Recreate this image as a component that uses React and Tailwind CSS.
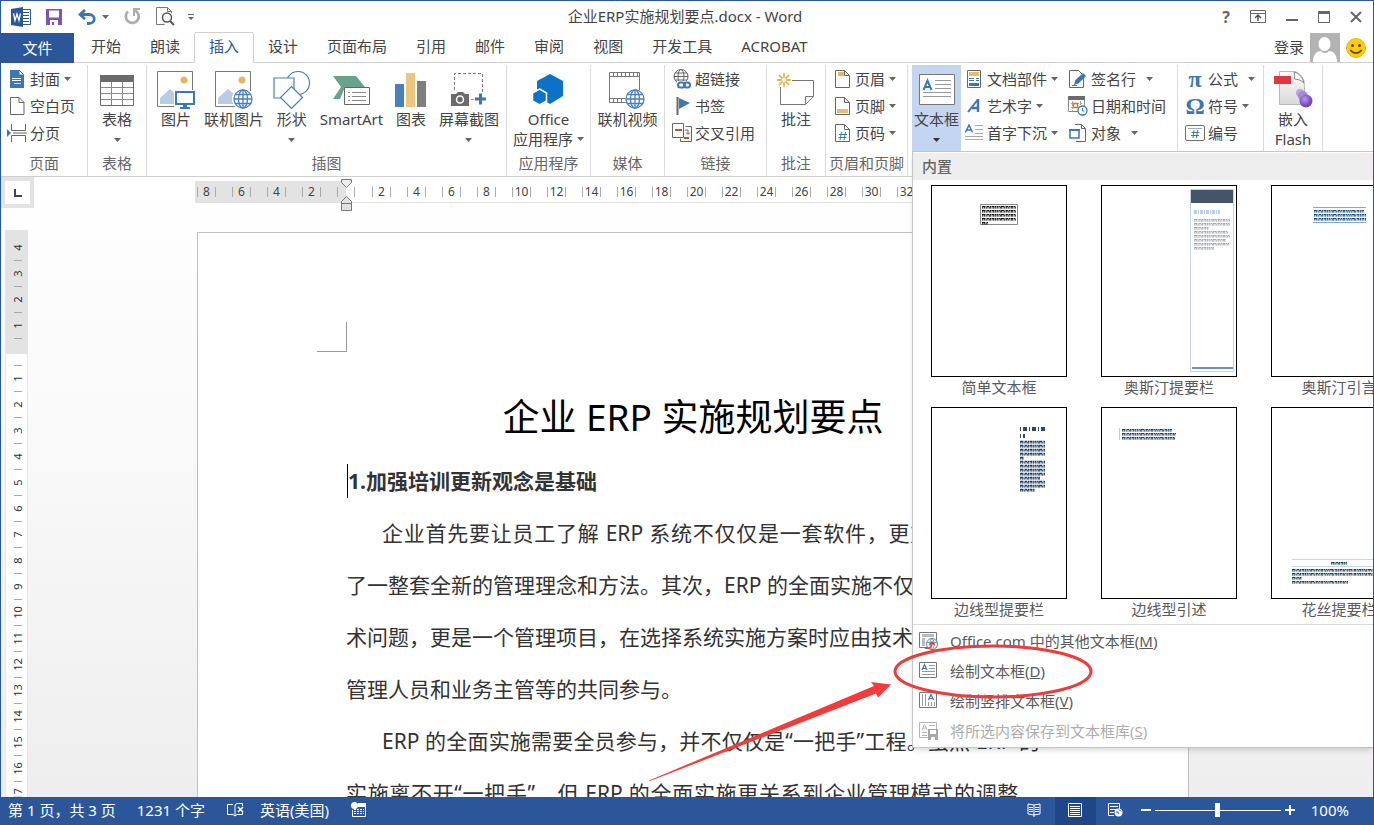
import { useState } from "react";
import { clsx } from "clsx";

const TABS = ["开始", "朗读", "插入", "设计", "页面布局", "引用", "邮件", "审阅", "视图", "开发工具", "ACROBAT"];

const RULER_LEFT = ["8", "6", "4", "2"];
const RULER_RIGHT = Array.from({ length: 18 }, (_, i) => String((i + 1) * 2));
const VRULER_TOP = ["4", "3", "2", "1"];
const VRULER_BODY = Array.from({ length: 17 }, (_, i) => String(i + 1));

/* ---------- shared bits ---------- */

function Svg({ w, h, children }) {
  return (
    <svg width={w} height={h} viewBox={`0 0 ${w} ${h}`} fill="none" className="shrink-0" aria-hidden>
      {children}
    </svg>
  );
}

function Caret({ className, color = "#666" }) {
  return (
    <svg width="7" height="4" viewBox="0 0 7 4" className={clsx("shrink-0", className)} aria-hidden>
      <path d="M0 0h7L3.5 4z" fill={color} />
    </svg>
  );
}

function Globe({ cx, cy, r, width = 1.3 }) {
  return (
    <g stroke="#4a80bd" strokeWidth={width} fill="#fff">
      <circle cx={cx} cy={cy} r={r} />
      <ellipse cx={cx} cy={cy} rx={r / 2} ry={r} fill="none" />
      <path d={`M${cx} ${cy - r}v${2 * r}M${cx - r} ${cy}h${2 * r}`} />
      <path d={`M${cx - r + 1} ${cy - r / 2}h${2 * r - 2}M${cx - r + 1} ${cy + r / 2}h${2 * r - 2}`} />
    </g>
  );
}

/* ---------- ribbon icons ---------- */

const CoverIcon = () => (
  <Svg w={16} h={18}>
    <path d="M1 0h9l5 5v13H1z" fill="#3c76b5" />
    <path d="M10 0v5h5z" fill="#fff" stroke="#3c76b5" />
    <path d="M3 8l1 1 1-1 1 1 1-1 1 1 1-1 1 1 1-1 1 1M3 10l1 1 1-1 1 1 1-1 1 1 1-1 1 1 1-1 1 1" stroke="#fff" />
    <path d="M5 13.500h7" stroke="#cfe0f2" />
  </Svg>
);

const BlankIcon = () => (
  <Svg w={16} h={18}>
    <path d="M1.500 .5h8.500l5 5v12h-13.500z M10 .5v5h5" stroke="#666" />
  </Svg>
);

const BreakIcon = () => (
  <Svg w={20} h={18}>
    <path d="M4.500 0v6.500h14V0M4.500 18v-6.500h14V18M6 9h14" stroke="#666" />
    <path d="M0 5l4 4-4 4z" fill="#3c76b5" />
  </Svg>
);

const TableIcon = () => (
  <Svg w={36} h={34}>
    <path d="M1.500 3.500h33v29h-33z" stroke="#6b6b6b" fill="#fff" />
    <path d="M1 2h34v7H1z" fill="#6b6b6b" />
    <path d="M12.500 9v23M23.500 9v23M2 14.500h32M2 20.500h32M2 26.500h32" stroke="#8a8a8a" />
  </Svg>
);

function PictureBase() {
  return (
    <>
      <path d="M.5 .5h35v35H.5z" stroke="#777" fill="#fff" />
      <circle cx="27" cy="9" r="3.500" fill="#e8b65c" />
      <path d="M3 33v-6l10-9 7 6v9z" fill="#b8cce4" />
    </>
  );
}

const PictureIcon = () => (
  <Svg w={38} h={38}>
    <PictureBase />
    <path d="M17 19h21v19H17z" fill="#fff" />
    <path d="M19 21h18v12H19z" stroke="#3c76b5" strokeWidth="2" />
    <path d="M26 34h4v2h3v2H23v-2h3z" fill="#3c76b5" />
  </Svg>
);

const OnlinePictureIcon = () => (
  <Svg w={38} h={38}>
    <PictureBase />
    <circle cx="28" cy="28" r="11" fill="#fff" />
    <Globe cx={28} cy={28} r={9} />
  </Svg>
);

const ShapesIcon = () => (
  <Svg w={38} h={38}>
    <g stroke="#4a80bd" fill="#fff" strokeWidth="1.200">
      <circle cx="25" cy="12" r="11.500" />
      <path d="M1 7h20v20H1z" />
      <path d="M18.500 15.500l11 11-11 11-11-11z" />
    </g>
  </Svg>
);

const SmartArtIcon = () => (
  <Svg w={38} h={36}>
    <path d="M1 4h23l9 11H13l-5 12H1l8-12z" fill="#6aa38b" />
    <path d="M12.500 15.500h25v17h-25z" fill="#fff" stroke="#666" />
    <path d="M16 20.500h2M20 20.500h14M16 24.500h2M20 24.500h14M16 28.500h2M20 28.500h14" stroke="#888" />
  </Svg>
);

const ChartIcon = () => (
  <Svg w={32} h={36}>
    <path d="M0 12h9v23H0z" fill="#4a80bd" />
    <path d="M11 1h9v34h-9z" fill="#ecc57f" />
    <path d="M22 9h9v26h-9z" fill="#7f7f7f" />
  </Svg>
);

const ScreenshotIcon = () => (
  <Svg w={36} h={36}>
    <path d="M3.500 18V1.500h28V20" stroke="#777" strokeDasharray="3 2" />
    <path d="M0 22h5l2-2h5l2 2h4v12H0z" fill="#6b6b6b" />
    <circle cx="9" cy="27.500" r="3.500" stroke="#fff" strokeWidth="1.500" />
    <path d="M20 27.500h3" stroke="#999" />
    <path d="M24 27h11M29.500 21.500v11" stroke="#3c76b5" strokeWidth="3" />
  </Svg>
);

const AppsIcon = () => (
  <Svg w={34} h={36}>
    <path d="M18 2l13 7v15l-13 8-13-8V9z" fill="#0a72c7" />
    <path d="M7.500 17l7 4v8l-7 4-7-4v-8z" fill="#0a72c7" stroke="#fff" strokeWidth="1.500" />
  </Svg>
);

const VideoIcon = () => (
  <Svg w={36} h={38}>
    <path d="M.5 1.500h30v30H.5z" fill="#fff" stroke="#777" />
    <path d="M1 5.500h29M1 27.500h29" stroke="#777" />
    <path d="M4.500 2v3M8.500 2v3M12.500 2v3M16.500 2v3M20.500 2v3M24.500 2v3M28.500 2v3" stroke="#777" />
    <path d="M4.500 28v3M8.500 28v3M12.500 28v3" stroke="#777" />
    <circle cx="26" cy="28" r="10" fill="#fff" />
    <Globe cx={26} cy={28} r={9} />
  </Svg>
);

const LinkIcon = () => (
  <Svg w={18} h={20}>
    <g stroke="#666">
      <circle cx="8" cy="7.500" r="7" />
      <ellipse cx="8" cy="7.500" rx="3" ry="7" />
      <path d="M1 7.500h14M2 4h12M2 11h12" />
    </g>
    <path d="M4 12h14v8H4z" fill="#fff" />
    <rect x="5" y="13.500" width="7" height="5" rx="2.500" stroke="#3c76b5" strokeWidth="2" />
    <rect x="11" y="13.500" width="6" height="5" rx="2.500" stroke="#3c76b5" strokeWidth="2" />
  </Svg>
);

const BookmarkIcon = () => (
  <Svg w={18} h={18}>
    <path d="M4.500 0v18" stroke="#666" strokeWidth="2" />
    <path d="M6 1l11 5-11 6z" fill="#3c76b5" />
  </Svg>
);

const CrossRefIcon = () => (
  <Svg w={20} h={20}>
    <path d="M.5 .5h11v14H.5z" stroke="#666" fill="#fff" />
    <path d="M8.500 18.500v-3M8.500 18.500h11v-15h-6" stroke="#666" />
    <path d="M3 7h7M12 15h5" stroke="#c0532a" strokeWidth="2" />
    <path d="M13 7h3v4M14 9.500l2 2 2-2" stroke="#666" />
  </Svg>
);

const CommentIcon = () => (
  <Svg w={38} h={34}>
    <path d="M3.500 14v17.500h25l8-8V7.500H15" stroke="#777" />
    <path d="M28.500 31.500v-8h8" stroke="#777" />
    <g stroke="#e8b65c" strokeWidth="1.800">
      <path d="M7 0v4M7 10v4M0 7h4M10 7h4M2 2l3 3M9 9l3 3M12 2L9 5M5 9l-3 3" />
      <circle cx="7" cy="7" r="2.500" strokeWidth="1" />
    </g>
  </Svg>
);

function PageOutline({ children }) {
  return (
    <Svg w={15} h={18}>
      <path d="M.5 .5h9l5 5v12H.5z M9.500 .5v5h5" stroke="#666" fill="#fff" />
      {children}
    </Svg>
  );
}

const HeaderIcon = () => (
  <PageOutline>
    <path d="M3 2h6v4H3z" fill="#e8b65c" />
  </PageOutline>
);
const FooterIcon = () => (
  <PageOutline>
    <path d="M2 12h11v4H2z" fill="#ecb96f" />
  </PageOutline>
);
const PageNumIcon = () => (
  <PageOutline>
    <path d="M6.500 8l-1.500 8M10.500 8l-1.500 8M4 10.500h8M3.500 13.500h8" stroke="#3c76b5" />
  </PageOutline>
);

const TextBoxIcon = () => (
  <Svg w={36} h={34}>
    <path d="M.5 1.500h35v30H.5z" fill="#fff" stroke="#777" />
    <path d="M4.500 17l4-9.500 4 9.500M6 14h5" stroke="#3c76b5" strokeWidth="2" />
    <path d="M16 7.500h16M16 11.500h16M16 15.500h16M4 19.500h28M4 23.500h28" stroke="#999" />
  </Svg>
);

const PartsIcon = () => (
  <Svg w={14} h={18}>
    <path d="M.5 .5h13v17H.5z" stroke="#666" fill="#fff" />
    <path d="M2 2h10v4H2z" fill="#ecb96f" />
    <path d="M2 8.500h5M2 10.500h5M9 8.500h3M9 10.500h3" stroke="#3c76b5" />
    <path d="M2 13h10v3H2z" fill="#3c76b5" />
  </Svg>
);

const WordArtIcon = () => (
  <Svg w={15} h={16}>
    <path d="M1 14L10.500 2" stroke="#3c76b5" strokeWidth="2" />
    <path d="M11 1v13M5 10h6" stroke="#3c76b5" strokeWidth="2.500" />
  </Svg>
);

const DropCapIcon = () => (
  <Svg w={18} h={18}>
    <path d="M.5 8.500l3.500-7.500 3.500 7.500M2 6h4" stroke="#3c76b5" strokeWidth="1.500" />
    <path d="M10 1.500h8M10 5.500h8M10 9.500h8M0 12.500h18M0 15.500h18" stroke="#aaa" />
  </Svg>
);

const SignIcon = () => (
  <Svg w={18} h={18}>
    <path d="M.5 .5h9l5 5v12H.5z" stroke="#666" fill="#fff" />
    <path d="M5 15l1.500-5L14 3l3 3-7.500 7.500z" fill="#3c76b5" />
    <path d="M3 15.500h5" stroke="#3c76b5" />
  </Svg>
);

const DateIcon = () => (
  <Svg w={20} h={20}>
    <path d="M.5 2.500h16v13H.5z" stroke="#888" fill="#fff" />
    <path d="M0 0h17v4H0z" fill="#6b6b6b" />
    <path d="M3 7.500h11M3 11.500h5M4.500 5v10M12.500 5v4" stroke="#aaa" strokeDasharray="2 1" />
    <path d="M5.500 7.500h4v4h-4z" stroke="#d9772b" strokeWidth="1.500" />
    <circle cx="14.500" cy="14.500" r="4.500" fill="#fff" stroke="#3c76b5" strokeWidth="1.300" />
    <path d="M14.500 12v3h2" stroke="#3c76b5" />
  </Svg>
);

const ObjectIcon = () => (
  <Svg w={18} h={18}>
    <path d="M6 .5h6.500l4 4v13H7" stroke="#666" />
    <path d="M12.500 .5v4h4" stroke="#666" />
    <path d="M1 6h9v8H1z" fill="#fff" stroke="#3c76b5" strokeWidth="1.500" />
    <path d="M0 6h11" stroke="#3c76b5" strokeWidth="2" />
  </Svg>
);

const SymbolGlyph = ({ children }) => (
  <span className="font-['Liberation_Serif',serif] text-[24px] leading-5 font-bold text-[#3c76b5]" aria-hidden>
    {children}
  </span>
);

const NumberIcon = () => (
  <Svg w={20} h={16}>
    <rect x=".5" y=".5" width="19" height="15" rx="1.500" stroke="#7a6a60" fill="#fff" />
    <path d="M3 3.500h14" stroke="#aaa" />
    <path d="M9 5l-1 8M12.500 5l-1 8M6.500 7.500h8M6 10.500h8" stroke="#3c76b5" />
  </Svg>
);

const FlashIcon = () => (
  <Svg w={40} h={38}>
    <defs>
      <radialGradient id="ball" cx="0.4" cy="0.35">
        <stop offset="0" stopColor="#b79be8" />
        <stop offset="1" stopColor="#7646c4" />
      </radialGradient>
      <linearGradient id="sheet" x1="0" y1="0" x2="0" y2="1">
        <stop offset="0" stopColor="#fdfdfd" />
        <stop offset="1" stopColor="#d9d9d9" />
      </linearGradient>
    </defs>
    <path d="M6.500 .5H22q9 3 9.500 14v19h-25z" fill="url(#sheet)" stroke="#b9b9b9" />
    <path d="M21 1q1 4 .5 7 6 0 9.500 4Q29 3 21 1z" fill="#fff" stroke="#888" />
    <path d="M1 5h17v8H1z" fill="#e0383f" />
    <circle cx="27" cy="22" r="4" fill="#b9a6e0" />
    <circle cx="30" cy="25" r="5" fill="#a58adb" />
    <circle cx="33" cy="30" r="6.500" fill="url(#ball)" />
  </Svg>
);

/* ---------- ribbon building blocks ---------- */

function Group({ label, className, children }) {
  return (
    <section className={clsx("relative flex shrink-0 flex-col border-r border-[#dcdcdc]", className)}>
      <div className="flex h-[86px]">{children}</div>
      {label && <div className="text-center leading-[25px] text-[#666]">{label}</div>}
    </section>
  );
}

function BigButton({ icon, label, second, caret, active }) {
  return (
    <button
      type="button"
      className={clsx("flex flex-col items-center pt-[5px]", active ? "bg-[#c3d5f0] px-[2px]" : "px-[6px]")}
    >
      <span className="flex h-[39px] items-center justify-center">{icon}</span>
      <span className="leading-[21px] whitespace-nowrap">{label}</span>
      {second && (
        <span className="flex items-center gap-1 leading-[18px] whitespace-nowrap">
          {second}
          {caret && <Caret />}
        </span>
      )}
      {caret && !second && <Caret className="mt-2" color={active ? "#333" : "#666"} />}
    </button>
  );
}

function SmallButton({ icon, label, caret, wide }) {
  return (
    <button type="button" className="flex h-[27px] items-center gap-1 whitespace-nowrap">
      <span className="flex w-[18px] shrink-0 items-center justify-center">{icon}</span>
      <span>{label}</span>
      {caret && <Caret className={wide ? "ml-[6px]" : ""} />}
    </button>
  );
}

function Ribbon() {
  return (
    <div className="flex h-[114px] shrink-0 overflow-hidden border-b border-[#d0d0d0] bg-white pt-[2px]">
      <Group label="页面" className="w-[87px]">
        <div className="flex flex-col pl-[7px]">
          <SmallButton icon={<CoverIcon />} label="封面" caret />
          <SmallButton icon={<BlankIcon />} label="空白页" />
          <SmallButton icon={<BreakIcon />} label="分页" />
        </div>
      </Group>
      <Group label="表格" className="w-[59px]">
        <div className="flex flex-1 justify-center">
          <BigButton icon={<TableIcon />} label="表格" caret />
        </div>
      </Group>
      <Group label="插图" className="w-[360px]">
        <div className="flex flex-1 justify-between pr-px pl-2">
          <BigButton icon={<span className="-mx-1"><PictureIcon /></span>} label="图片" />
          <BigButton icon={<OnlinePictureIcon />} label="联机图片" />
          <BigButton icon={<span className="-mx-1"><ShapesIcon /></span>} label="形状" caret />
          <BigButton icon={<SmartArtIcon />} label="SmartArt" />
          <BigButton icon={<span className="-mx-px"><ChartIcon /></span>} label="图表" />
          <BigButton icon={<ScreenshotIcon />} label="屏幕截图" caret />
        </div>
      </Group>
      <Group label="应用程序" className="w-[84px]">
        <div className="flex flex-1 justify-center">
          <BigButton icon={<AppsIcon />} label="Office" second="应用程序" caret />
        </div>
      </Group>
      <Group label="媒体" className="w-[74px]">
        <div className="flex flex-1 justify-center">
          <BigButton icon={<VideoIcon />} label="联机视频" />
        </div>
      </Group>
      <Group label="链接" className="w-[102px]">
        <div className="flex flex-col pl-2">
          <SmallButton icon={<LinkIcon />} label="超链接" />
          <SmallButton icon={<BookmarkIcon />} label="书签" />
          <SmallButton icon={<CrossRefIcon />} label="交叉引用" />
        </div>
      </Group>
      <Group label="批注" className="w-[59px]">
        <div className="flex flex-1 justify-center">
          <BigButton icon={<CommentIcon />} label="批注" />
        </div>
      </Group>
      <Group label="页眉和页脚" className="w-[82px]">
        <div className="flex flex-col pl-[7px]">
          <SmallButton icon={<HeaderIcon />} label="页眉" caret />
          <SmallButton icon={<FooterIcon />} label="页脚" caret />
          <SmallButton icon={<PageNumIcon />} label="页码" caret />
        </div>
      </Group>
      <Group className="w-[270px]">
        <div className="flex pl-1">
          <BigButton icon={<TextBoxIcon />} label="文本框" caret active />
        </div>
        <div className="flex w-[108px] flex-col pl-1">
          <SmallButton icon={<PartsIcon />} label="文档部件" caret />
          <SmallButton icon={<WordArtIcon />} label="艺术字" caret />
          <SmallButton icon={<DropCapIcon />} label="首字下沉" caret />
        </div>
        <div className="flex flex-col">
          <SmallButton icon={<SignIcon />} label="签名行" caret wide />
          <SmallButton icon={<DateIcon />} label="日期和时间" />
          <SmallButton icon={<ObjectIcon />} label="对象" caret wide />
        </div>
      </Group>
      <Group className="w-[86px]">
        <div className="flex flex-col pl-2">
          <SmallButton icon={<SymbolGlyph>π</SymbolGlyph>} label="公式" caret wide />
          <SmallButton icon={<SymbolGlyph>Ω</SymbolGlyph>} label="符号" caret />
          <SmallButton icon={<NumberIcon />} label="编号" />
        </div>
      </Group>
      <Group className="w-[59px]">
        <div className="flex flex-1 justify-center">
          <BigButton icon={<FlashIcon />} label="嵌入" second="Flash" />
        </div>
      </Group>
    </div>
  );
}

/* ---------- title bar and tabs ---------- */

function TitleBar() {
  return (
    <header className="grid h-8 shrink-0 grid-cols-[1fr_auto_1fr] items-center bg-white pb-px">
      <div className="flex items-center pl-[10px]">
        <Svg w={20} h={20}>
          <path d="M10 2.500h9.500v15H10" stroke="#2b579a" fill="#fff" />
          <path d="M12 5.500h6M12 8.500h6M12 11.500h6M12 14.500h6" stroke="#2b579a" />
          <path d="M0 2l12-2v20L0 18z" fill="#2b579a" />
          <path d="M2.500 6.500l1.500 7 2-6.500 2 6.500 1.500-7" stroke="#fff" strokeWidth="1.300" />
        </Svg>
        <button type="button" aria-label="保存" className="ml-[15px]">
          <Svg w={16} h={16}>
            <path d="M0 0h16v16H0z" fill="#8253a8" />
            <path d="M3 1.500h10v7H3zM4 11h8v5H4z" fill="#fff" />
            <path d="M6 13h2v3H6z" fill="#8253a8" />
          </Svg>
        </button>
        <button type="button" aria-label="撤消" className="ml-4 flex items-center gap-[6px]">
          <Svg w={18} h={16}>
            <path d="M7 1L2 5.500 7 10M2.500 5.500H11c7 0 7 9 0 9H9" stroke="#3c76b5" strokeWidth="2.800" />
          </Svg>
          <Caret />
        </button>
        <button type="button" aria-label="重复" className="ml-[15px]">
          <Svg w={17} h={17}>
            <path d="M11 2.500A6.500 6.500 0 1 1 4 3.500" stroke="#adadad" strokeWidth="2.800" />
            <path d="M9 0h7v2h-5v6H9z" fill="#adadad" />
          </Svg>
        </button>
        <button type="button" aria-label="打印预览" className="ml-[15px]">
          <Svg w={19} h={19}>
            <path d="M15.500 6V4.500l-4-4H.5v17h8M11.500 .5v4h4" stroke="#777" />
            <circle cx="11" cy="10.500" r="4.500" stroke="#555" strokeWidth="1.500" fill="#fff" />
            <path d="M14 14l4 4" stroke="#555" strokeWidth="2" />
          </Svg>
        </button>
        <button type="button" aria-label="自定义快速访问工具栏" className="ml-[13px] flex flex-col items-center gap-[2px]">
          <span className="h-px w-[6px] bg-[#666]" />
          <Svg w={6} h={3}>
            <path d="M0 0h6L3 3z" fill="#666" />
          </Svg>
        </button>
      </div>
      <h1 className="pr-1 pb-px text-[#444]">企业ERP实施规划要点.docx - Word</h1>
      <div className="flex items-center justify-end gap-5 pr-[11px]">
        <button type="button" aria-label="帮助" className="text-[16px] font-bold text-[#666]">
          ?
        </button>
        <button type="button" aria-label="功能区显示选项">
          <Svg w={16} h={13}>
            <path d="M.5 .5h15v12H.5zM1 3.500h14" stroke="#666" />
            <path d="M8 11V5.500M5 8l3-3 3 3" stroke="#555" strokeWidth="1.500" />
          </Svg>
        </button>
        <button type="button" aria-label="最小化">
          <Svg w={12} h={12}>
            <path d="M0 9h12" stroke="#666" strokeWidth="2" />
          </Svg>
        </button>
        <button type="button" aria-label="最大化">
          <Svg w={12} h={12}>
            <path d="M.5 .5h11v11H.5z" stroke="#666" />
            <path d="M0 0h12v3H0z" fill="#666" />
          </Svg>
        </button>
        <button type="button" aria-label="关闭">
          <Svg w={12} h={12}>
            <path d="M1 1l10 10M11 1L1 11" stroke="#666" strokeWidth="2" />
          </Svg>
        </button>
      </div>
    </header>
  );
}

function TabBar({ tab, onChange }) {
  return (
    <nav className="flex h-[30px] shrink-0 bg-white">
      <button type="button" className="w-[73px] bg-[#2b579a] pb-px text-white">
        文件
      </button>
      <div className="flex flex-1 gap-px border-b border-[#d0d0d0] pl-[3px]">
        {TABS.map((t) => (
          <button
            key={t}
            type="button"
            onClick={() => onChange(t)}
            className={clsx(
              "-mb-px border-b px-[14px] pb-[3px]",
              t === tab
                ? "border-b-white text-[#2b579a] shadow-[-1px_0_0_#d0d0d0,1px_0_0_#d0d0d0,0_-1px_0_#d0d0d0]"
                : "border-b-[#d0d0d0]",
            )}
          >
            {t}
          </button>
        ))}
        <div className="ml-auto flex items-center gap-[6px] pr-[7px]">
          <button type="button" className="pb-[2px]">
            登录
          </button>
          <Svg w={30} h={29}>
            <path d="M0 0h30v29H0z" fill="#b3b3b3" />
            <ellipse cx="14.500" cy="11" rx="6" ry="7" fill="#fff" />
            <path d="M3 29c0-7 3-11 8-11 3 3 5 3 8 0 5 0 8 4 8 11z" fill="#fff" />
          </Svg>
          <Svg w={20} h={20}>
            <circle cx="10" cy="10" r="9.500" fill="#fccc0a" stroke="#eab40a" />
            <circle cx="6.500" cy="7.500" r="1.500" fill="#5c4300" />
            <circle cx="13.500" cy="7.500" r="1.500" fill="#5c4300" />
            <path d="M4.500 12c2.500 4 8.500 4 11 0" stroke="#5c4300" strokeWidth="1.500" />
          </Svg>
        </div>
      </div>
    </nav>
  );
}

/* ---------- rulers ---------- */

function HTick({ n }) {
  return (
    <span className="flex w-[35px] shrink-0 items-center">
      <span className="h-[10px] w-[18px] border-l border-[#aaa] text-center leading-[10px]">{n}</span>
      <span className="h-[10px] w-[17px] border-l border-[#aaa]" />
    </span>
  );
}

// Indent handles sit over the ruler's zero mark and hang below it.
function IndentMarker() {
  return (
    <span className="absolute -top-[2px] left-[145px]">
      <Svg w={13} h={33}>
        <path d="M1.500 .5h10v3l-5 5-5-5z" fill="#eee" stroke="#777" />
        <path d="M1.500 31.500v-9l5-5 5 5v9z" fill="#e2e2e2" stroke="#777" />
        <path d="M1.500 24.500h10" stroke="#777" />
      </Svg>
    </span>
  );
}

function HorizontalRuler() {
  return (
    <div className="flex h-[31px] shrink-0">
      <button type="button" aria-label="制表符" className="w-[33px] shrink-0 bg-[#e3e3e3] p-1">
        <span className="flex h-[23px] items-center justify-center bg-white">
          <Svg w={8} h={8}>
            <path d="M1 0v7h7" stroke="#444" strokeWidth="2" />
          </Svg>
        </span>
      </button>
      <div className="flex flex-1 justify-center pr-[21px]">
        <div className="relative mt-1 flex h-[22px] w-[996px] border-b border-[#e0e0e0] bg-white text-[12px] text-[#444]">
          <div className="flex w-[151px] shrink-0 bg-[#e3e3e3] pt-px pl-[2px]">
            {RULER_LEFT.map((n) => (
              <HTick key={n} n={n} />
            ))}
            <span className="my-[5px] w-[9px] border-l border-[#aaa]" />
          </div>
          <div className="flex flex-1 overflow-hidden pt-px">
            <span className="my-[5px] ml-2 w-[18px] shrink-0 border-l border-[#aaa]" />
            {RULER_RIGHT.map((n) => (
              <HTick key={n} n={n} />
            ))}
          </div>
          <IndentMarker />
        </div>
      </div>
    </div>
  );
}

function VTick({ n }) {
  return (
    <span className="flex h-[26px] shrink-0 flex-col items-center">
      <span className="flex h-[25px] -rotate-90 items-center justify-center">{n}</span>
      <span className="h-px w-2 bg-[#aaa]" />
    </span>
  );
}

function VerticalRuler() {
  return (
    <div className="ml-1 flex w-[23px] shrink-0 flex-col overflow-hidden text-[11px] text-[#333]">
      <div className="mt-[22px] flex h-[124px] shrink-0 flex-col bg-[#e3e3e3] pt-[5px] pl-[2px]">
        {VRULER_TOP.map((n) => (
          <VTick key={n} n={n} />
        ))}
      </div>
      <div className="flex min-h-0 flex-1 flex-col overflow-hidden border-x border-[#e6e6e6] bg-white pt-[11px] pl-[2px]">
        <span className="h-px w-2 shrink-0 self-center bg-[#aaa]" />
        {VRULER_BODY.map((n) => (
          <VTick key={n} n={n} />
        ))}
      </div>
    </div>
  );
}

/* ---------- document ---------- */

function Line({ indent, plain, children }) {
  return (
    <span className={clsx("block whitespace-nowrap", indent && "pl-9", !plain && "[text-align-last:justify]")}>
      {children}
    </span>
  );
}

function DocumentPage() {
  return (
    <article className="mt-6 h-[1400px] w-[992px] border border-[#c0c0c0] bg-white text-[21px] leading-[52px] text-[#333]">
      <div className="flex h-[119px] items-end pl-[119px]">
        <span className="h-[30px] w-[30px] border-r border-b border-[#999]" />
      </div>
      <div className="px-[148px] pt-[27px]">
        <h2 className="text-center text-[37px] leading-[76px] text-black">企业 ERP 实施规划要点</h2>
        <h3 className="flex items-center pl-px font-bold">
          <span className="h-[34px] w-px bg-black" />
          1.加强培训更新观念是基础
        </h3>
        <p>
          <Line indent>企业首先要让员工了解 ERP 系统不仅仅是一套软件，更重要的是引进</Line>
          <Line plain>了一整套全新的管理理念和方法。其次，ERP 的全面实施不仅仅是一个技</Line>
          <Line plain>术问题，更是一个管理项目，在选择系统实施方案时应由技术人员、各级</Line>
          <Line plain>管理人员和业务主管等的共同参与。</Line>
        </p>
        <p>
          <Line indent>ERP 的全面实施需要全员参与，并不仅仅是“一把手”工程。虽然 ERP 的</Line>
          <Line>实施离不开“一把手”，但 ERP 的全面实施更关系到企业管理模式的调整，</Line>
        </p>
      </div>
    </article>
  );
}

/* ---------- text box gallery ---------- */

function Scribble({ x, y, widths, color, step = 4, heavy }) {
  return widths.map((w, i) => (
    <g key={i} stroke={color}>
      <path
        d={`M${x} ${y + i * step - 0.5}h${w}`}
        strokeWidth={heavy ? 1.5 : 1}
        strokeDasharray="3 .5 1 .5 2 .6 1.500 .4"
      />
      <path d={`M${x} ${y + i * step + 0.8}h${w}`} strokeWidth="1.200" strokeDasharray="1 .5 2 .6 1 .4" />
    </g>
  ));
}

const GALLERY = [
  {
    name: "简单文本框",
    art: (
      <>
        <path d="M48.500 18.500h37v20h-37z" stroke="#888" />
        <Scribble x={50} y={21} widths={[34, 34, 34, 34, 6]} color="#111" />
      </>
    ),
  },
  {
    name: "奥斯汀提要栏",
    art: (
      <>
        <path d="M88.500 3.500h43v182h-43z" stroke="#c3d3e8" />
        <path d="M89 4h42v13H89z" fill="#44546a" />
        <path d="M92 26h26" stroke="#b7cfec" strokeWidth="4" strokeDasharray="3 1 1 1" />
        <Scribble x={92} y={34} widths={[36, 36, 15, 34, 36, 32, 35, 20]} color="#a4a9b3" />
        <path d="M90 182h41" stroke="#6b94c4" strokeWidth="2" />
      </>
    ),
  },
  {
    name: "奥斯汀引言",
    art: (
      <>
        <path d="M41 21.500h53M41 36.500h53" stroke="#7fa8d2" />
        <Scribble x={42} y={25} widths={[50, 52, 52]} color="#1f4e79" />
      </>
    ),
  },
  {
    name: "边线型提要栏",
    art: (
      <>
        <path d="M88 21h25M88 28h5" stroke="#34475c" strokeWidth="4" strokeDasharray="1 2 4 2" />
        <Scribble
          x={88}
          y={34}
          widths={[25, 25, 25, 25, 4, 25, 25, 25, 25, 20, 25, 25, 15]}
          color="#1d3f66"
          heavy
        />
      </>
    ),
  },
  {
    name: "边线型引述",
    art: (
      <>
        <path d="M17.500 20v12" stroke="#c7cbd1" />
        <Scribble x={20} y={22} widths={[50, 54, 53]} color="#1f4263" />
      </>
    ),
  },
  {
    name: "花丝提要栏",
    art: (
      <>
        <path d="M20 151.500h96M20 158.500h96" stroke="#c4d8ee" />
        <Scribble x={59} y={155} widths={[16]} color="#1f4263" />
        <Scribble x={20} y={162} widths={[96, 96, 10, 56]} color="#1d3f66" />
      </>
    ),
  },
];

const MenuFrame = ({ muted, children }) => (
  <Svg w={20} h={20}>
    <path d="M.5 1.500h17v15H.5z" stroke={muted ? "#b5b5b5" : "#777"} fill="#fff" />
    {children}
  </Svg>
);

const MENU_ITEMS = [
  {
    label: "Office.com 中的其他文本框",
    shortcut: "M",
    icon: (
      <MenuFrame>
        <path d="M3 3h12v3H3zM3 7h3v8H3z" fill="#bbb" />
        <circle cx="13" cy="13" r="5.500" fill="#fff" stroke="#4a80bd" />
        <path d="M13 7.500c-3 3-3 8 0 11M13 7.500c3 3 3 8 0 11M8 11.500h10" stroke="#4a80bd" strokeWidth=".8" />
        <path d="M6 17c6 1 7-1 7-5M10.500 14l2.500-3 2.500 3" stroke="#e0482c" strokeWidth="1.500" />
      </MenuFrame>
    ),
  },
  {
    label: "绘制文本框",
    shortcut: "D",
    icon: (
      <MenuFrame>
        <path d="M3 9l2.500-5.500L8 9M4 7.500h3" stroke="#3c76b5" strokeWidth="1.200" />
        <path d="M10 4.500h6M10 7.500h6M3 10.500h13M3 13.500h13" stroke="#999" />
      </MenuFrame>
    ),
  },
  {
    label: "绘制竖排文本框",
    shortcut: "V",
    icon: (
      <MenuFrame>
        <path d="M9.500 9l2.500-5.500L14.500 9M10.500 7.500h3" stroke="#3c76b5" strokeWidth="1.200" />
        <path d="M3.500 3v12M6.500 3v12M9.500 11v4M12.500 11v4M15.500 11v4" stroke="#999" />
      </MenuFrame>
    ),
  },
  {
    label: "将所选内容保存到文本框库",
    shortcut: "S",
    disabled: true,
    icon: (
      <MenuFrame muted>
        <path d="M3 9l2-5h1l2 5M4 7h3M10 4.500h6M3 11.500h5M3 14.500h5" stroke="#b5b5b5" />
        <path d="M9 8h10v11H9z" fill="#a8a8a8" />
        <path d="M11 9h6v4h-6zM12 16h4v3h-4z" fill="#fff" />
      </MenuFrame>
    ),
  },
];

function TextBoxMenu() {
  return (
    <div className="absolute top-[150px] right-0 left-[911px] z-10 overflow-hidden border border-r-0 border-[#c6c6c6] bg-white text-[#5a5a5a] shadow-md">
      <h2 className="mt-px bg-[#eee] pl-[9px] leading-[27px] font-medium text-[#666]">内置</h2>
      <div className="grid grid-cols-[136px_136px_136px] gap-x-[34px] pt-[5px] pl-[18px]">
        {GALLERY.map((g) => (
          <button key={g.name} type="button" className="flex h-[222px] flex-col items-center">
            <span className="h-[192px] w-full border border-black">
              <Svg w={134} h={190}>{g.art}</Svg>
            </span>
            <span className="leading-5 whitespace-nowrap">{g.name}</span>
          </button>
        ))}
      </div>
      <ul className="-mt-[5px] border-t border-[#dcdcdc] pt-px pb-px">
        {MENU_ITEMS.map((m) => (
          <li key={m.shortcut}>
            <button
              type="button"
              disabled={m.disabled}
              className={clsx("flex h-[30px] w-full items-center gap-[11px] pl-[6px]", m.disabled && "text-[#adadad]")}
            >
              {m.icon}
              <span className="whitespace-nowrap">
                {m.label}(<u>{m.shortcut}</u>)
              </span>
            </button>
          </li>
        ))}
      </ul>
    </div>
  );
}

function Annotation() {
  return (
    <svg
      width="460"
      height="150"
      viewBox="640 640 460 150"
      fill="none"
      className="pointer-events-none absolute top-[639px] left-[639px] z-20"
      aria-hidden
    >
      <ellipse cx="993" cy="671.500" rx="98" ry="25.500" stroke="#f23a3a" strokeWidth="3" />
      <path d="M649 780.500L874 686l-3-4 20 2.500-13 13-2-4L650 781z" fill="#f63a3a" />
    </svg>
  );
}

/* ---------- status bar ---------- */

function StatusBar() {
  const [zoom, setZoom] = useState(50);
  return (
    <footer className="flex h-7 shrink-0 items-center bg-[#2b579a] text-white">
      <span className="pb-[2px] pl-[7px] whitespace-nowrap">第 1 页，共 3 页</span>
      <span className="pb-[2px] pl-[21px] whitespace-nowrap">1231 个字</span>
      <button type="button" aria-label="校对" className="ml-[21px] pb-[2px]">
        <Svg w={18} h={16}>
          <path d="M7 2.500H1.500v10H7l2 1.500 2-1.500h5.500V10M9 14V3l2-1.500h5.500V4" stroke="#fff" />
          <path d="M12 5l5 5M17 5l-5 5" stroke="#fff" strokeWidth="1.500" />
        </Svg>
      </button>
      <button type="button" className="ml-4 pb-[2px]">
        英语(美国)
      </button>
      <button type="button" aria-label="宏" className="ml-[22px] pb-[2px]">
        <Svg w={16} h={16}>
          <circle cx="3.500" cy="3.500" r="3.500" fill="#fff" />
          <path d="M7 1h8v4H7z" fill="#fff" />
          <path d="M1.500 8v6.500h13V5" stroke="#fff" />
          <path d="M3 7.500h10M3 9.500h10M3 11.500h10" stroke="#fff" strokeDasharray="2 1" />
        </Svg>
      </button>
      <div className="ml-auto flex h-full items-center">
        <button type="button" aria-label="阅读视图" className="px-[14px] pb-[2px]">
          <Svg w={14} h={14}>
            <path d="M7 2L1 1v10l6 1 6-1V1zM7 2v12" stroke="#fff" />
            <path d="M2 4.500h4M2 6.500h4M2 8.500h4M8 4.500h4M8 6.500h4M8 8.500h4" stroke="#fff" />
          </Svg>
        </button>
        <button type="button" aria-label="页面视图" className="flex h-full w-[41px] items-center justify-center bg-[#1f4788] pb-[2px]">
          <Svg w={14} h={14}>
            <path d="M.5 .5h13v13H.5zM2 3.500h10M2 5.500h10M2 7.500h10M2 9.500h10M2 11.500h10" stroke="#fff" />
          </Svg>
        </button>
        <button type="button" aria-label="Web 版式视图" className="px-3 pb-[2px]">
          <Svg w={15} h={14}>
            <path d="M6 12.500H.5V.5h11V6M2 3.500h8M2 6.500h6M2 9.500h4" stroke="#fff" />
            <circle cx="10.500" cy="9.500" r="4" fill="#fff" />
            <path d="M8 9h2l1 2M11 6.500l2 2" stroke="#2b579a" />
          </Svg>
        </button>
        <button type="button" aria-label="缩小" className="ml-[6px] pb-[2px]">
          <Svg w={10} h={10}>
            <path d="M0 5h10" stroke="#fff" strokeWidth="2" />
          </Svg>
        </button>
        <input
          type="range"
          aria-label="缩放"
          value={zoom}
          onChange={(e) => setZoom(e.target.value)}
          className="mx-1 mb-px h-[14px] w-[126px] appearance-none bg-transparent [&::-webkit-slider-runnable-track]:h-px [&::-webkit-slider-runnable-track]:bg-white [&::-webkit-slider-thumb]:-mt-[7px] [&::-webkit-slider-thumb]:h-[14px] [&::-webkit-slider-thumb]:w-[5px] [&::-webkit-slider-thumb]:appearance-none [&::-webkit-slider-thumb]:bg-white"
        />
        <button type="button" aria-label="放大" className="pb-[2px]">
          <Svg w={10} h={10}>
            <path d="M0 5h10M5 0v10" stroke="#fff" strokeWidth="2" />
          </Svg>
        </button>
        <button type="button" className="pr-6 pb-[2px] pl-4">
          100%
        </button>
      </div>
    </footer>
  );
}

export default function App() {
  const [tab, setTab] = useState("插入");

  return (
    <div className="relative flex h-screen flex-col overflow-hidden border border-b-0 border-[#2b579a] font-['Noto_Sans','Noto_Sans_CJK_SC',sans-serif] text-[15px] leading-5 text-[#444]">
      <TitleBar />
      <TabBar tab={tab} onChange={setTab} />
      <Ribbon />
      <main className="flex min-h-0 flex-1 flex-col bg-linear-to-b from-white via-[#f8f8f8] to-[#eee]">
        <HorizontalRuler />
        <div className="flex min-h-0 flex-1">
          <VerticalRuler />
          <div className="flex flex-1 justify-center overflow-hidden pr-[15px]">
            <DocumentPage />
          </div>
        </div>
      </main>
      <StatusBar />
      <TextBoxMenu />
      <Annotation />
    </div>
  );
}
